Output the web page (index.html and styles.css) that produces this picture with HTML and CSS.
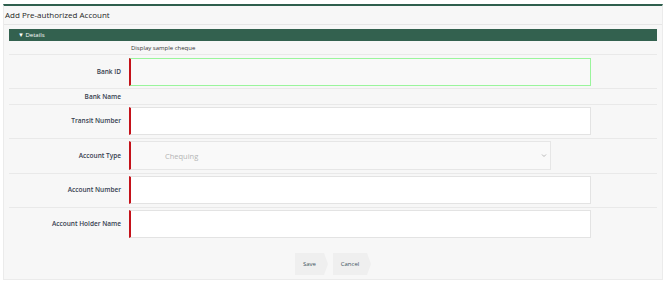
FILE: index.html
```html
<!DOCTYPE html>
<html lang="en">
<head>
<meta charset="UTF-8" />
<meta name="viewport" content="width=device-width, initial-scale=1" />
<title>Add Pre-authorized Account</title>
<link rel="stylesheet" href="styles.css">
</head>
<body>

<div class="panel">
  <div class="panel-title">Add Pre-authorized Account</div>

  <div class="section">
    <div class="section-head">&#9660; Details</div>

    <div class="row row-slim">
      <div class="label"></div>
      <div class="field"><a class="sample-link">Display sample cheque</a></div>
    </div>

    <div class="row row-first">
      <label class="label" for="bankId">Bank ID</label>
      <div class="field"><input type="text" id="bankId" class="input input-focus" /></div>
    </div>

    <div class="row row-slim row-name">
      <div class="label">Bank Name</div>
      <div class="field"></div>
    </div>

    <div class="row">
      <label class="label" for="transit">Transit Number</label>
      <div class="field"><input type="text" id="transit" class="input" /></div>
    </div>

    <div class="row">
      <label class="label" for="acctType">Account Type</label>
      <div class="field">
        <div class="select">
          <span class="select-text">Chequing</span>
          <svg class="select-arrow" width="6" height="5" viewBox="0 0 6 5"><path d="M1 1.5 L3 3.5 L5 1.5" fill="none" stroke="#b8b8b8" stroke-width="1"/></svg>
        </div>
      </div>
    </div>

    <div class="row">
      <label class="label" for="acctNum">Account Number</label>
      <div class="field"><input type="text" id="acctNum" class="input" /></div>
    </div>

    <div class="row row-last">
      <label class="label" for="holder">Account Holder Name</label>
      <div class="field"><input type="text" id="holder" class="input" /></div>
    </div>

    <div class="actions">
      <button class="btn">Save</button>
      <button class="btn btn-wide">Cancel</button>
    </div>
  </div>
</div>

</body>
</html>
```

FILE: styles.css
```css
body {
  margin: 0;
  padding: 0;
  background: #ffffff;
  font-family: 'Open Sans', 'Liberation Sans', sans-serif;
  color: #2c3a48;
}
.panel {
  margin: 4px 0 0 3px;
  width: 658px;
  height: 273px;
  background: #f7f7f7;
  border-top: 2px solid #2f5f4e;
  border-left: 1px solid #ebebeb;
  border-right: 1px solid #ebebeb;
  border-bottom: 1px solid #ebebeb;
}
.panel-title {
  height: 18px;
  line-height: 18px;
  padding-left: 1px;
  font-size: 8px;
  color: #1e1e1e;
  border-bottom: 1px solid #e6e6e6;
}
.section {
  padding: 4px 5px 0 5px;
}
.section-head {
  height: 12px;
  line-height: 12px;
  background: #33614f;
  color: #ffffff;
  font-size: 6px;
  padding-left: 9px;
}
.row {
  display: grid;
  grid-template-columns: 112px 1fr;
  column-gap: 8px;
  align-items: center;
  padding: 2px 0 3px 0;
  font-size: 6.5px;
  line-height: 8px;
  border-bottom: 1px solid #e9e9e9;
}
.row-first {
  padding: 3px 0 2px 0;
}
.row-slim {
  height: 13px;
  padding: 0;
}
.row-name {
  height: 15px;
}
.row-last {
  border-bottom: none;
}
.label {
  text-align: right;
  font-size: 6.5px;
  font-weight: 600;
  color: #35404f;
}
.sample-link {
  font-size: 6px;
  color: #333;
  padding-left: 2px;
}
.input {
  display: block;
  box-sizing: border-box;
  width: 462px;
  height: 28px;
  margin: 0;
  background: #ffffff;
  border: 1px solid #e3e3e3;
  border-left: 2px solid #c4121a;
  border-radius: 0;
  outline: none;
}
.input-focus {
  border-color: #9af59c;
  border-left: 2px solid #c4121a;
  background: #f9f9f9;
}
.select {
  box-sizing: border-box;
  width: 422px;
  height: 29px;
  display: flex;
  align-items: center;
  justify-content: space-between;
  background: #f9f9f9;
  border: 1px solid #e6e6e6;
  border-left: 2px solid #c4121a;
  padding: 0 3px 0 34px;
}
.select-text {
  font-size: 7.5px;
  color: #b5b5b5;
}
.actions {
  display: flex;
  justify-content: center;
  gap: 9px;
  padding: 12px 4px 0 0;
}
.btn {
  position: relative;
  height: 22px;
  width: 29px;
  padding: 0;
  border: none;
  background: #efefef;
  font-family: inherit;
  font-size: 6px;
  color: #3e5560;
  cursor: pointer;
}
.btn::after {
  content: "";
  position: absolute;
  top: 0;
  right: -4px;
  border-top: 11px solid transparent;
  border-bottom: 11px solid transparent;
  border-left: 4px solid #efefef;
}
.btn-wide {
  width: 34px;
}
```
